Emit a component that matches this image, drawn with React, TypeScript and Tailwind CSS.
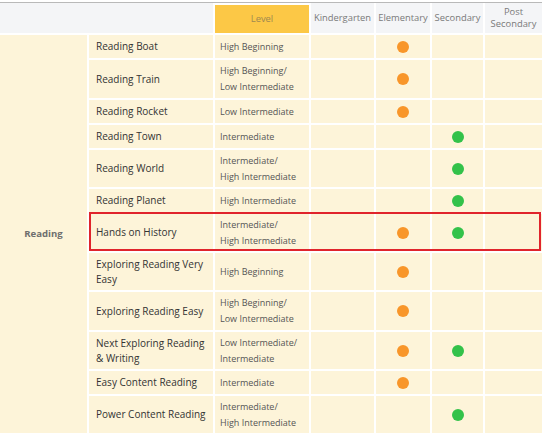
import React from "react";

type Row = { t: string; l: string[]; e?: boolean; s?: boolean; h: string; hl?: boolean };

const rows: Row[] = [
  { t: "Reading Boat", l: ["High Beginning"], e: true, h: "h-[23px]" },
  { t: "Reading Train", l: ["High Beginning/", "Low Intermediate"], e: true, h: "h-[38px]" },
  { t: "Reading Rocket", l: ["Low Intermediate"], e: true, h: "h-[23px]" },
  { t: "Reading Town", l: ["Intermediate"], s: true, h: "h-[23px]" },
  { t: "Reading World", l: ["Intermediate/", "High Intermediate"], s: true, h: "h-[37px]" },
  { t: "Reading Planet", l: ["High Intermediate"], s: true, h: "h-[23px]" },
  { t: "Hands on History", l: ["Intermediate/", "High Intermediate"], e: true, s: true, h: "h-[37px]", hl: true },
  { t: "Exploring Reading Very Easy", l: ["High Beginning"], e: true, h: "h-[37px]" },
  { t: "Exploring Reading Easy", l: ["High Beginning/", "Low Intermediate"], e: true, h: "h-[38px]" },
  { t: "Next Exploring Reading & Writing", l: ["Low Intermediate/", "Intermediate"], e: true, s: true, h: "h-[37px]" },
  { t: "Easy Content Reading", l: ["Intermediate"], e: true, h: "h-[23px]" },
  { t: "Power Content Reading", l: ["Intermediate/", "High Intermediate"], s: true, h: "h-[37px]" },
];

const cell = "bg-[#fdf4d9]";

function Dot({ c }: { c: string }) {
  return <span className={`block w-[12px] h-[12px] rounded-full ${c}`} />;
}

export default function App() {
  return (
    <div className="w-[542px] h-[438px] bg-white font-['Open_Sans',sans-serif] overflow-hidden">
      <div className="mt-[2px] border-t border-[#b9b9b9]">
        {/* header */}
        <div className="grid grid-cols-[213px_94px_63px_54px_51px_57px] gap-x-[2px] h-[30px] text-[9.4px] text-[#7a7a7a]">
          <div className="bg-[#f4f5f7]" />
          <div className="mt-[2px] bg-[#fcc846] flex items-center justify-center text-[#a08850]">Level</div>
          <div className="bg-[#f4f5f7] flex items-center justify-center">Kindergarten</div>
          <div className="bg-[#f4f5f7] flex items-center justify-center">Elementary</div>
          <div className="bg-[#f4f5f7] flex items-center justify-center">Secondary</div>
          <div className="bg-[#f4f5f7] flex flex-col items-center justify-center leading-[12px]">
            <span>Post</span>
            <span>Secondary</span>
          </div>
        </div>
        {/* body */}
        <div className="flex gap-x-[2px] mt-[2px]">
          <div className={`w-[87px] shrink-0 ${cell} flex items-center justify-center text-[9.6px] font-bold text-[#6e6e6e]`}>
            Reading
          </div>
          <div className="flex flex-col gap-y-[2px]">
            {rows.map((r) => (
              <div key={r.t} className="relative">
                <div className={`grid grid-cols-[124px_94px_63px_54px_51px_57px] gap-x-[2px] ${r.h}`}>
                  <div className={`${cell} flex items-center pl-[7px] pr-[4px] text-[10px] leading-[15px] text-[#333333]`}>
                    {r.t}
                  </div>
                  <div className={`${cell} flex flex-col justify-center pl-[5px] text-[9px] leading-[16px] text-[#555555]`}>
                    {r.l.map((x) => (
                      <span key={x}>{x}</span>
                    ))}
                  </div>
                  <div className={cell} />
                  <div className={`${cell} flex items-center justify-center`}>{r.e && <Dot c="bg-[#f8962a]" />}</div>
                  <div className={`${cell} flex items-center justify-center`}>{r.s && <Dot c="bg-[#33c24a]" />}</div>
                  <div className={cell} />
                </div>
                {r.hl && (
                  <div className="absolute left-0 right-[1px] top-[-2px] bottom-0 border-2 border-[#e0242c] pointer-events-none" />
                )}
              </div>
            ))}
          </div>
        </div>
      </div>
    </div>
  );
}
